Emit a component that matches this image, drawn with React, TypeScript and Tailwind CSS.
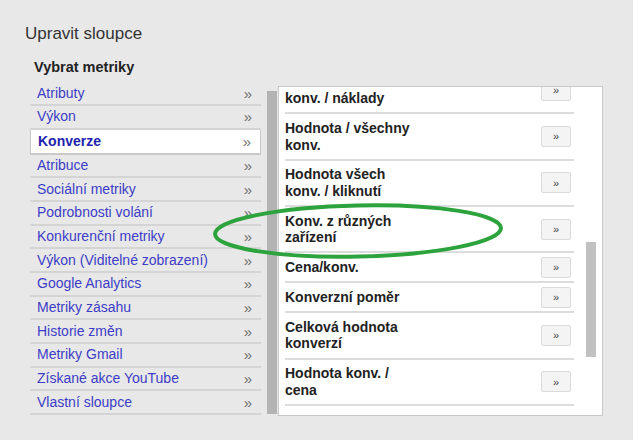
const groups = [
  "Atributy",
  "Výkon",
  "Konverze",
  "Atribuce",
  "Sociální metriky",
  "Podrobnosti volání",
  "Konkurenční metriky",
  "Výkon (Viditelné zobrazení)",
  "Google Analytics",
  "Metriky zásahu",
  "Historie změn",
  "Metriky Gmail",
  "Získané akce YouTube",
  "Vlastní sloupce",
];

const metrics = [
  ["Hodnota všech", "konv. / náklady"],
  ["Hodnota / všechny", "konv."],
  ["Hodnota všech", "konv. / kliknutí"],
  ["Konv. z různých", "zařízení"],
  ["Cena/konv."],
  ["Konverzní poměr"],
  ["Celková hodnota", "konverzí"],
  ["Hodnota konv. /", "cena"],
];

export default function App() {
  return (
    <div className="relative w-[634px] h-[442px] overflow-hidden bg-[#e8e8e8] border-r border-b-2 border-white font-['Liberation_Sans',Arial,sans-serif]">
      <div className="pt-[24px] pl-[25px]">
        <h1 className="text-[17px] leading-[20px] text-[#333]">Upravit sloupce</h1>
        <h2 className="mt-[13.7px] pl-[9px] text-[14.5px] leading-[18px] font-bold text-[#222]">
          Vybrat metriky
        </h2>

        <div className="mt-[5px] pl-[5px] flex items-start">
          {/* Category list */}
          <div className="w-[231px] pt-[1.5px]">
            {groups.map((g) => {
              const active = g === "Konverze";
              return (
                <div
                  key={g}
                  className={
                    active
                      ? "h-[25px] flex items-center justify-between pl-[7px] pr-[9px] bg-white border-x border-b-2 border-[#c9c9c9] text-[14px] font-bold text-[#2323ad]"
                      : "h-[23.7px] flex items-center justify-between pl-[7px] pr-[9px] border-b-2 border-[#d4d4d4] text-[14px] text-[#3d3dc6]"
                  }
                >
                  <span>{g}</span>
                  <span className="text-[15px] leading-none text-[#707070] font-normal">»</span>
                </div>
              );
            })}
          </div>

          {/* Middle scrollbar */}
          <div className="ml-[6px] mt-[10.3px] w-[10px] h-[323px] bg-[#b3b3b3]" />

          {/* Metric panel */}
          <div className="ml-[1px] mt-[5.3px] w-[325px] h-[330px] bg-white border border-[#c8c8c8] overflow-hidden flex">
            <div className="pl-[6px] w-[295px]">
              <div className="-mt-[19px]">
                {metrics.map((m) => (
                  <div
                    key={m.join(" ")}
                    className="flex items-center justify-between border-b-2 border-[#dcdcdc]"
                  >
                    <div className="w-[134px] py-[5.7px] text-[14px] leading-[16.5px] font-bold text-[#222]">
                      {m.map((l) => (
                        <div key={l}>{l}</div>
                      ))}
                    </div>
                    <div className="mr-[3px] w-[30px] h-[21px] rounded-[2px] border border-[#dadada] bg-[#f4f4f4] flex items-center justify-center text-[11px] text-[#444]">
                      »
                    </div>
                  </div>
                ))}
              </div>
            </div>
            <div className="ml-[12px] mt-[154.7px] w-[10px] h-[115px] bg-[#c1c1c1]" />
          </div>
        </div>
      </div>

      {/* Hand-drawn highlight */}
      <svg
        className="absolute inset-0 pointer-events-none"
        width="634"
        height="442"
        viewBox="0 0 634 442"
      >
        <ellipse
          cx="358"
          cy="231"
          rx="143"
          ry="25.5"
          fill="none"
          stroke="#2ca33c"
          strokeWidth="4"
          transform="rotate(-1.2 358 231)"
        />
      </svg>
    </div>
  );
}
